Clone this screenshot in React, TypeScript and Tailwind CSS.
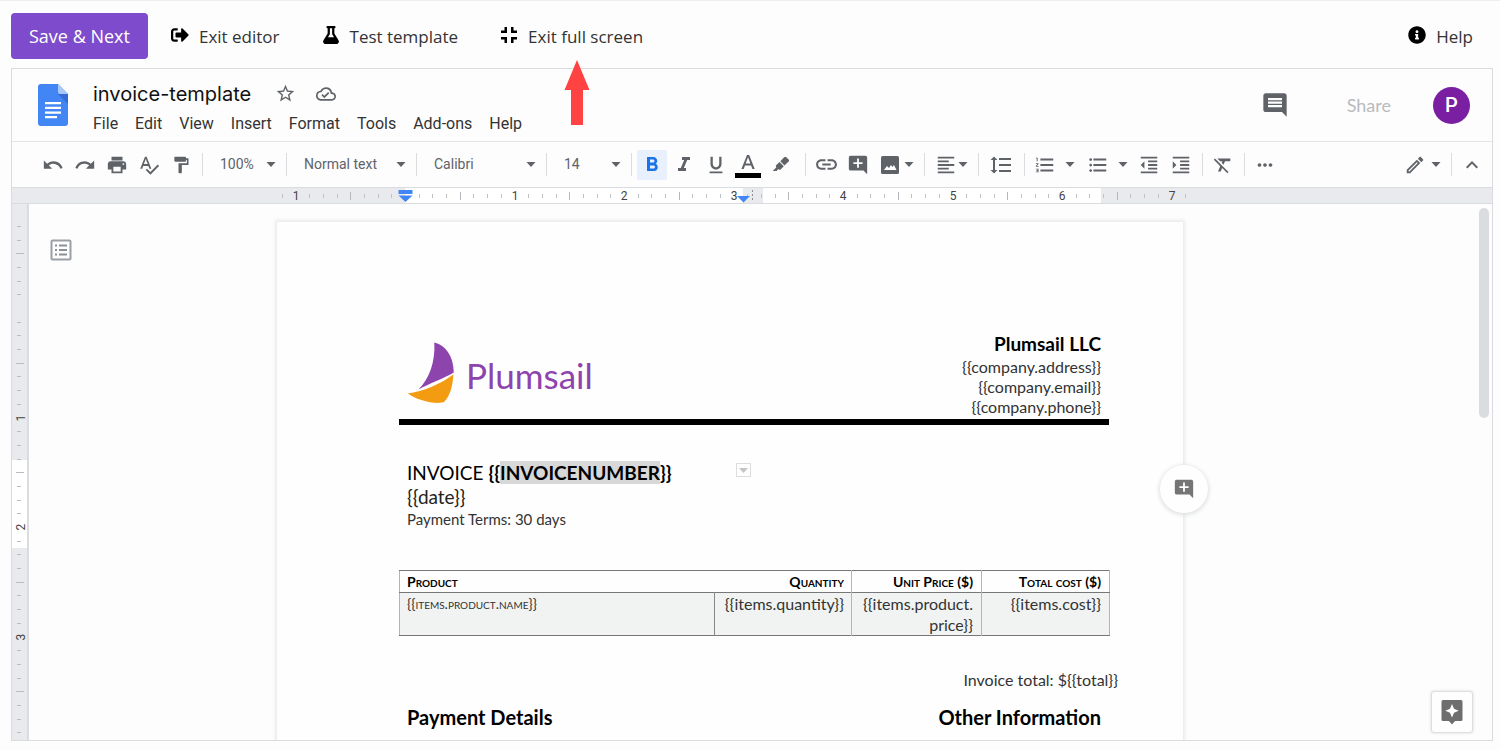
import type { ReactNode } from "react";
import { FaFlask, FaInfoCircle, FaSignOutAlt } from "react-icons/fa";
import {
  MdAddComment,
  MdFormatAlignLeft,
  MdFormatBold,
  MdFormatClear,
  MdFormatIndentDecrease,
  MdFormatIndentIncrease,
  MdFormatItalic,
  MdFormatLineSpacing,
  MdFormatListBulleted,
  MdFormatListNumbered,
  MdFormatPaint,
  MdFormatUnderlined,
  MdInsertComment,
  MdKeyboardArrowUp,
  MdLink,
  MdMoreHoriz,
  MdOutlineCloudDone,
  MdOutlineEdit,
  MdPrint,
  MdRedo,
  MdSpellcheck,
  MdStarBorder,
  MdUndo,
} from "react-icons/md";

const INCH = 109.5;

function Triangle() {
  return (
    <svg width="10" height="5" viewBox="0 0 10 5" fill="#5f6368" aria-hidden="true">
      <path d="M0.5 0h9L5 5z" />
    </svg>
  );
}

function CompressIcon() {
  return (
    <svg width="18" height="18" viewBox="0 0 18 18" fill="currentColor" aria-hidden="true">
      <path d="M4.500 1H7v6H1V4.500h3.500zM11 1h2.500v3.500H17V7h-6zM1 11h6v6H4.500v-3.500H1zM11 11h6v2.500h-3.500V17H11z" />
    </svg>
  );
}

function Separator() {
  return <div className="h-[23px] w-px shrink-0 bg-[#dadce0]" />;
}

function Tool({ label, children }: { label: string; children: ReactNode }) {
  return (
    <button
      type="button"
      aria-label={label}
      className="flex h-[30px] w-8 shrink-0 items-center justify-center text-[22px] text-[#5f6368]"
    >
      {children}
    </button>
  );
}

function Caret({ label, className }: { label: string; className: string }) {
  return (
    <button type="button" aria-label={label} className={`flex h-[30px] w-2.5 shrink-0 items-center ${className}`}>
      <Triangle />
    </button>
  );
}

function Picker({ label, value, width }: { label: string; value: string; width: string }) {
  return (
    <div className={`relative flex h-[30px] shrink-0 items-center ${width}`}>
      <select
        aria-label={label}
        className="h-full w-full appearance-none bg-transparent pl-[17px] text-[14px] text-[#5f6368]"
      >
        <option>{value}</option>
      </select>
      <span className="pointer-events-none absolute right-2.5">
        <Triangle />
      </span>
    </div>
  );
}

function TopAction({ icon, label }: { icon: ReactNode; label: string }) {
  return (
    <button type="button" className="flex items-center gap-[10px] text-[17px] leading-[26px] text-[#333]">
      <span className="pb-[3px] text-[18px] text-black">{icon}</span>
      {label}
    </button>
  );
}

function TopBar() {
  return (
    <div className="flex h-[68px] shrink-0 items-center border-t border-[#efefef] pr-[27px] pl-[11px] font-['Open_Sans',sans-serif]">
      <button
        type="button"
        className="mt-0.5 h-[46px] rounded-[4px] bg-[#7d4bcb] px-[18px] pt-0.5 text-[18px] text-white"
      >
        Save &amp; Next
      </button>
      <div className="ml-[23px] flex flex-1 items-center gap-[42px] pt-1">
        <TopAction icon={<FaSignOutAlt />} label="Exit editor" />
        <TopAction icon={<FaFlask />} label="Test template" />
        <div className="relative flex">
          <TopAction icon={<CompressIcon />} label="Exit full screen" />
          <svg
            className="absolute top-full left-16 z-10 mt-2.5"
            width="26"
            height="66"
            viewBox="0 0 26 66"
            fill="#ff4343"
            aria-hidden="true"
          >
            <path d="M13 0l12.5 30H19v35H7V30H0.5z" />
          </svg>
        </div>
        <div className="ml-auto">
          <TopAction icon={<FaInfoCircle />} label="Help" />
        </div>
      </div>
    </div>
  );
}

const MENUS = ["File", "Edit", "View", "Insert", "Format", "Tools", "Add-ons", "Help"];

function DocHeader() {
  return (
    <header className="flex h-[73px] shrink-0 items-center border-b border-[#e3e5e9] pr-[22px] pl-[26px]">
      <svg width="30" height="42" viewBox="0 0 30 42" aria-hidden="true">
        <path d="M3 0h17l10 10v29a3 3 0 0 1-3 3H3a3 3 0 0 1-3-3V3a3 3 0 0 1 3-3z" fill="#4285f4" />
        <path d="M20 10h10v10z" fill="#3569d6" />
        <path d="M20 0l10 10H22a2 2 0 0 1-2-2z" fill="#a9c7fa" />
        <path d="M7 18h16v2.300H7zM7 22.800h16v2.300H7zM7 27.400h16v2.300H7zM7 32h12v2.300H7z" fill="#fff" />
      </svg>
      <div className="ml-[25px] pt-[7px]">
        <div className="flex h-[31px] items-center">
          <h1 className="font-['Inter',sans-serif] text-[20px] text-[#111]">invoice-template</h1>
          <button type="button" aria-label="Star" className="ml-6 text-[21px] text-[#5f6368]">
            <MdStarBorder />
          </button>
          <button type="button" aria-label="Saved to Drive" className="ml-5 text-[20px] text-[#5f6368]">
            <MdOutlineCloudDone />
          </button>
        </div>
        <nav className="flex h-[30px] items-center gap-[17px] text-[16px] text-[#333]">
          {MENUS.map((m) => (
            <button type="button" key={m}>
              {m}
            </button>
          ))}
        </nav>
      </div>
      <div className="ml-auto flex items-center">
        <button type="button" aria-label="Comment history" className="text-[28px] text-[#5f6368]">
          <MdInsertComment />
        </button>
        <button type="button" disabled className="ml-[58px] font-['Lato',sans-serif] text-[18px] text-[#b9bbbd]">
          Share
        </button>
        <button
          type="button"
          aria-label="Account"
          className="ml-[42px] h-[37px] w-[37px] rounded-full bg-[#7b1fa2] text-[20px] font-medium text-white"
        >
          P
        </button>
      </div>
    </header>
  );
}

function Toolbar() {
  return (
    <div role="toolbar" className="flex h-[46px] shrink-0 items-center border-b border-[#dadce0] pr-1 pl-[25px]">
      <Tool label="Undo"><MdUndo /></Tool>
      <Tool label="Redo"><MdRedo /></Tool>
      <Tool label="Print"><MdPrint /></Tool>
      <Tool label="Spelling check"><MdSpellcheck /></Tool>
      <Tool label="Paint format"><MdFormatPaint className="text-[20px]" /></Tool>
      <div className="w-[5px]" />
      <Separator />
      <Picker label="Zoom" value="100%" width="w-[83px]" />
      <Separator />
      <Picker label="Style" value="Normal text" width="w-[129px]" />
      <Separator />
      <Picker label="Font" value="Calibri" width="w-[129px]" />
      <Separator />
      <Picker label="Font size" value="14" width="w-[84px]" />
      <Separator />
      <button
        type="button"
        aria-label="Bold"
        aria-pressed="true"
        className="mx-[5px] flex h-[30px] w-[30px] shrink-0 items-center justify-center rounded-[2px] bg-[#e8f0fe] text-[24px] text-[#1a73e8]"
      >
        <MdFormatBold />
      </button>
      <div className="-ml-1 flex">
        <Tool label="Italic"><MdFormatItalic className="text-[24px]" /></Tool>
        <Tool label="Underline"><MdFormatUnderlined /></Tool>
        <Tool label="Text color">
          <svg width="26" height="26" viewBox="0 0 26 26" aria-hidden="true">
            <path d="M12 3h2.200l5.500 14h-2.300l-1.300-3.500H10L8.700 17H6.400zM10.700 11.500h4.700L13 5.200z" fill="#5f6368" />
            <path d="M0 21h26v5H0z" fill="#000" />
          </svg>
        </Tool>
        <div className="w-px" />
        <Tool label="Highlight color">
          <svg width="18" height="18" viewBox="0 0 18 18" fill="#5f6368" aria-hidden="true">
            <path d="M12.200 1.200a1.500 1.500 0 0 1 2.100 0l2.300 2.300a1.500 1.500 0 0 1 0 2.100L12.500 9.500 8.300 5.300z" />
            <path d="M7.500 6.100l4.300 4.200-3.200 3.100a1.300 1.300 0 0 1-1.800 0l-.5-.4L4.600 15H0.700l3.700-3.800-.3-.3a1.300 1.300 0 0 1 0-1.700z" />
          </svg>
        </Tool>
      </div>
      <div className="w-2" />
      <Separator />
      <div className="ml-1 flex">
        <Tool label="Insert link"><MdLink className="text-[25px]" /></Tool>
        <Tool label="Add comment"><MdAddComment /></Tool>
        <Tool label="Insert image">
          <svg width="18" height="18" viewBox="0 0 18 18" aria-hidden="true">
            <rect width="18" height="18" rx="1.500" fill="#5f6368" />
            <path d="M3 14l3-4 2 2 2-3 1.500 2L13 9l2.500 5z" fill="#fff" />
          </svg>
        </Tool>
        <Caret label="Image options" className="-ml-0.5" />
      </div>
      <div className="w-2.5" />
      <Separator />
      <div className="ml-[5px] flex">
        <Tool label="Align"><MdFormatAlignLeft /></Tool>
        <Caret label="Align options" className="-ml-1" />
      </div>
      <div className="w-2.5" />
      <Separator />
      <div className="mr-[7px] ml-1.5 flex">
        <Tool label="Line spacing"><MdFormatLineSpacing className="text-[24px]" /></Tool>
      </div>
      <Separator />
      <div className="mr-[5px] ml-1 flex">
        <Tool label="Numbered list"><MdFormatListNumbered /></Tool>
        <Caret label="Numbered list options" className="mx-1" />
        <div className="w-[3px]" />
        <Tool label="Bulleted list"><MdFormatListBulleted /></Tool>
        <Caret label="Bulleted list options" className="mr-[5px] ml-1" />
        <Tool label="Decrease indent"><MdFormatIndentDecrease /></Tool>
        <Tool label="Increase indent"><MdFormatIndentIncrease /></Tool>
      </div>
      <Separator />
      <div className="mr-[5px] ml-1 flex">
        <Tool label="Clear formatting"><MdFormatClear /></Tool>
      </div>
      <Separator />
      <div className="ml-1 flex">
        <Tool label="More"><MdMoreHoriz /></Tool>
      </div>
      <div className="ml-auto flex items-center">
        <Tool label="Editing mode"><MdOutlineEdit className="text-[22px]" /></Tool>
        <Caret label="Editing mode options" className="mr-2.5" />
        <Separator />
        <div className="ml-1 flex">
          <Tool label="Hide menus"><MdKeyboardArrowUp className="text-[24px]" /></Tool>
        </div>
      </div>
    </div>
  );
}

function HorizontalRuler() {
  const zero = 128;
  const ticks = Array.from({ length: 67 }, (_, i) => i - 9).filter((n) => n % 8 !== 0);
  return (
    <div className="flex h-4 shrink-0 justify-center border-b border-[#dadce0] bg-[#e8eaed] pr-11">
      <svg
        width="906"
        height="15"
        viewBox="0 0 906 15"
        className="shrink-0 overflow-visible"
        role="img"
        aria-label="Horizontal ruler"
      >
        <path d="M128 0h338v15H128zM486 0h338v15H486z" fill="#fff" />
        {ticks.map((n) => {
          const long = n % 4 === 0;
          return (
            <rect
              key={n}
              x={Math.round(zero + (n * INCH) / 8)}
              y={long ? 4 : 6}
              width="1"
              height={long ? 8 : 4}
              fill={long ? "#b4b7bb" : "#bfc2c6"}
            />
          );
        })}
        {[-1, 1, 2, 3, 4, 5, 6, 7].map((n) => (
          <text key={n} x={Math.round(zero + n * INCH)} y="12" textAnchor="middle" fontSize="12" fill="#444">
            {Math.abs(n)}
          </text>
        ))}
        <path d="M121.500 2h14v4h-14zM121.500 7.500h14l-7 6.500z" fill="#4285f4" />
        <path d="M475.500 2v12" stroke="#8a8d91" strokeDasharray="2 2" />
        <path d="M460 8h13l-6.500 6.500z" fill="#4285f4" />
      </svg>
    </div>
  );
}

function VerticalRuler() {
  const zero = 104;
  const ticks = Array.from({ length: 39 }, (_, i) => i - 6).filter((n) => n % 8 !== 0);
  return (
    <div className="w-[17px] shrink-0 overflow-hidden border-r-2 border-[#dadce0] bg-[#e8eaed]">
      <svg width="15" height="536" viewBox="0 0 15 536" role="img" aria-label="Vertical ruler">
        <path d="M0 256h15v88H0z" fill="#fff" />
        {ticks.map((n) => {
          const long = n % 4 === 0;
          return (
            <rect
              key={n}
              x={long ? 4 : 5}
              y={Math.round(zero + (n * INCH) / 8)}
              width={long ? 8 : 4}
              height="1"
              fill="#b9bcc0"
            />
          );
        })}
        {[1, 2, 3].map((n) => (
          <text
            key={n}
            transform={`translate(13 ${Math.round(zero + n * INCH)}) rotate(-90)`}
            textAnchor="middle"
            fontSize="12"
            fill="#444"
          >
            {n}
          </text>
        ))}
      </svg>
    </div>
  );
}

function PlumsailLogo() {
  return (
    <div className="flex items-center gap-[11px]">
      <svg width="48" height="62" viewBox="0 0 48 62" aria-hidden="true">
        <path d="M27.300 0.500C38 3 46.500 13 46.800 30.500 37 36.500 22 41.500 11.500 47.500 22 37 28.500 20 27.300 0.500z" fill="#8e44ad" />
        <path d="M46.300 32.500C46 43 43 54 37.500 59.500 32 63.500 8.500 58.500 1 51.300 16 49.500 33 42.500 46.300 32.500z" fill="#f39c12" />
      </svg>
      <span className="pt-1 text-[35px] leading-[40px] text-[#8e44ad]">Plumsail</span>
    </div>
  );
}

function ItemsTable() {
  return (
    <table className="mt-[41px] w-full table-fixed border-collapse border-x border-y border-x-[#9db6e8] border-y-[#777] text-[16px] leading-[21px] text-[#333]">
      <colgroup>
        <col className="w-[315px]" />
        <col className="w-[137px]" />
        <col className="w-[130px]" />
        <col className="w-[128px]" />
      </colgroup>
      <thead className="border-b border-[#777] text-[14px] text-black [font-variant:small-caps]">
        <tr>
          <th className="px-[7px] py-0 text-left font-bold">Product</th>
          <th className="px-[7px] py-0 text-right font-bold">Quantity</th>
          <th className="border-l border-[#9db6e8] px-2 py-0 text-right font-bold">Unit Price ($)</th>
          <th className="border-l border-[#9db6e8] px-2 py-0 text-right font-bold">Total cost ($)</th>
        </tr>
      </thead>
      <tbody className="bg-[#f1f3f3]">
        <tr className="align-top">
          <td className="px-[7px] py-0 text-[14px] [font-variant:small-caps]">{"{{items.product.name}}"}</td>
          <td className="border-l border-[#888] px-[7px] py-0 text-right">{"{{items.quantity}}"}</td>
          <td className="border-l border-[#9db6e8] px-2 py-0 text-right">
            {"{{items.product."}
            <br />
            {"price}}"}
          </td>
          <td className="border-l border-[#9db6e8] px-2 py-0 text-right">{"{{items.cost}}"}</td>
        </tr>
      </tbody>
    </table>
  );
}

function Page() {
  return (
    <article className="relative w-[906px] shrink-0 bg-[#fefefe] pt-[109px] pr-[74px] pl-[122px] font-['Lato',sans-serif] text-[16px] leading-[20px] text-[#333] shadow-[0_0_3px_2px_#e9ebee]">
      <div className="flex justify-between border-b-[6px] border-black pr-2 pb-0.5 pl-2">
        <div className="pt-[11px]">
          <PlumsailLogo />
        </div>
        <div className="text-right">
          <h2 className="text-[19px] leading-[26px] font-bold text-black">Plumsail LLC</h2>
          <p>{"{{company.address}}"}</p>
          <p>{"{{company.email}}"}</p>
          <p>{"{{company.phone}}"}</p>
        </div>
      </div>
      <div className="relative mt-[35px] pl-2">
        <p className="text-[19px] leading-[25px] text-black">
          INVOICE{" "}
          <b>
            {"{{"}
            <mark className="bg-[#d8d8d8] text-black">INVOICENUMBER</mark>
            {"}}"}
          </b>
        </p>
        <p className="text-[19px] leading-[24px] text-[#222]">{"{{date}}"}</p>
        <p className="text-[15px]">Payment Terms: 30 days</p>
        <button
          type="button"
          aria-label="Cell options"
          className="absolute top-[3px] left-[337px] flex h-[14px] w-[15px] items-center justify-center border border-[#ddd]"
        >
          <svg width="9" height="5" viewBox="0 0 9 5" fill="#c4c4c4" aria-hidden="true">
            <path d="M0 0h9L4.500 5z" />
          </svg>
        </button>
      </div>
      <ItemsTable />
      <p className="-mr-[9px] mt-[34px] text-right">{"Invoice total: ${{total}}"}</p>
      <div className="mt-[15px] flex justify-between px-2 text-[20px] leading-[24px] font-bold text-black">
        <h3>Payment Details</h3>
        <h3>Other Information</h3>
      </div>
      <button
        type="button"
        aria-label="Add a comment"
        className="absolute top-[243px] -right-[25px] flex h-12 w-12 items-center justify-center rounded-full bg-[#fefefe] text-[22px] text-[#757575] shadow-[0_1px_4px_1px_#dcdfe2]"
      >
        <MdAddComment />
      </button>
    </article>
  );
}

function Canvas() {
  return (
    <main className="relative flex min-h-0 flex-1 overflow-hidden">
      <VerticalRuler />
      <div className="relative flex flex-1 justify-center pt-[18px] pr-[61px]">
        <Page />
        <button type="button" aria-label="Show outline" className="absolute top-[35px] left-[21px]">
          <svg width="22" height="22" viewBox="0 0 22 22" aria-hidden="true">
            <rect x="1.500" y="1.500" width="19" height="19" rx="1" fill="none" stroke="#9aa0a6" strokeWidth="2" />
            <path
              d="M5 5.500h2v2H5zM9 5.500h8v2H9zM5 10h2v2H5zM9 10h8v2H9zM5 14.500h2v2H5zM9 14.500h8v2H9z"
              fill="#8b9096"
            />
          </svg>
        </button>
      </div>
      <div className="absolute top-1 right-[3px] h-[210px] w-[10px] rounded-full bg-[#dadce0]" />
      <button
        type="button"
        aria-label="Explore"
        className="absolute right-[19px] bottom-[7px] flex h-[42px] w-[42px] items-center justify-center rounded-[3px] border border-[#dcdee1] bg-[#fefefe] shadow-[0_0_3px_#d5d8db]"
      >
        <svg width="22" height="25" viewBox="0 0 22 25" aria-hidden="true">
          <path d="M2 0h18a1.500 1.500 0 0 1 1.500 1.500v18A1.500 1.500 0 0 1 20 21h-6l-3 3.500L8 21H2a1.500 1.500 0 0 1-1.500-1.500v-18A1.500 1.500 0 0 1 2 0z" fill="#6e6e6e" />
          <path d="M11 4l2 4.700 4.700 2-4.700 2L11 17.400l-2-4.700-4.700-2 4.700-2z" fill="#fff" />
        </svg>
      </button>
    </main>
  );
}

export default function App() {
  return (
    <div className="flex h-screen flex-col bg-[#fdfdfd] font-['Roboto',sans-serif]">
      <TopBar />
      <div className="mr-[7px] mb-[9px] ml-[11px] flex min-h-0 flex-1 flex-col border border-[#d9dbde]">
        <DocHeader />
        <Toolbar />
        <HorizontalRuler />
        <Canvas />
      </div>
    </div>
  );
}
